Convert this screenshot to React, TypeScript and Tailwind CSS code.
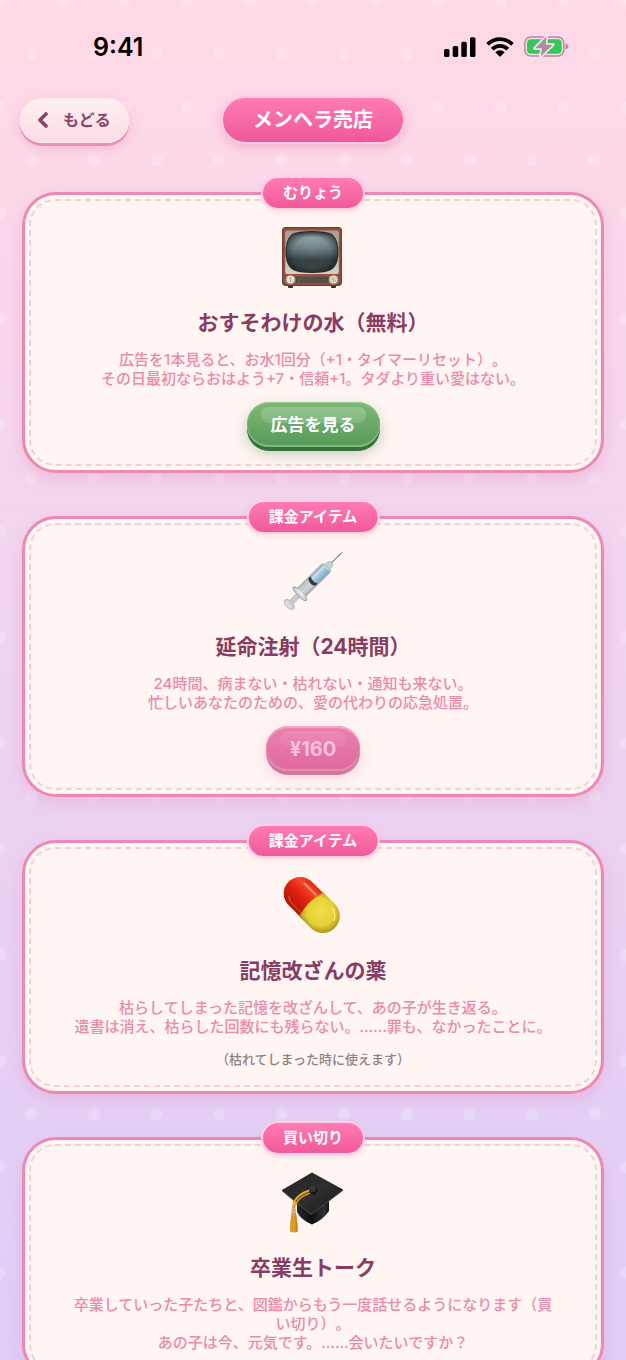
import type { ReactNode } from "react"

type Item = {
  id: string
  badge: string
  icon: ReactNode
  title: string
  lines: string[]
  action?: { label: string; kind: "free" | "paid" }
  note?: string
}

function TvIcon() {
  return (
    <svg viewBox="0 0 62 62" className="size-[62px]" aria-hidden="true">
      <defs>
        <linearGradient id="tv-screen" x1="0" y1="0" x2="0" y2="1">
          <stop offset="0" stopColor="#55666a" />
          <stop offset="0.12" stopColor="#9fb4b6" />
          <stop offset="0.4" stopColor="#76898b" />
          <stop offset="0.7" stopColor="#3a4547" />
          <stop offset="1" stopColor="#3d4645" />
        </linearGradient>
        <radialGradient id="tv-shade" cx="0.5" cy="0.5" r="0.6">
          <stop offset="0" stopColor="#2b3436" stopOpacity="0" />
          <stop offset="0.6" stopColor="#2b3436" stopOpacity="0.15" />
          <stop offset="1" stopColor="#0d1213" stopOpacity="0.8" />
        </radialGradient>
        <linearGradient id="tv-front" x1="0" y1="0" x2="0" y2="1">
          <stop offset="0" stopColor="#a79d91" />
          <stop offset="1" stopColor="#d9d0c2" />
        </linearGradient>
      </defs>
      <rect x="6" y="57" width="5" height="4" rx="1" fill="#3f2a22" />
      <rect x="49" y="57" width="5" height="4" rx="1" fill="#3f2a22" />
      <rect x="0" y="0" width="60" height="59" rx="4" fill="#944f40" />
      <rect x="0.6" y="0.6" width="58.8" height="57.8" rx="3.6" fill="none" stroke="#70402f" strokeWidth="1.2" />
      <rect x="3.200" y="3.500" width="53.600" height="43.500" rx="2" fill="url(#tv-front)" />
      <path d="M30 4Q44 4 49 6.500C54 9.500 56.500 16 56.500 25S54 40 49 43Q44 46 30 46T11 43C6 40 3.500 34 3.500 25S6 9.500 11 6.500Q16 4 30 4Z" fill="#272c2d" />
      <path d="M30 5.200Q43.500 5.200 48.300 7.700C53 10.500 55.200 17 55.200 25S53 39.200 48.300 42Q43.500 44.800 30 44.800T11.700 42C7 39.200 4.800 33 4.800 25S7 10.500 11.700 7.700Q16.500 5.200 30 5.200Z" fill="url(#tv-screen)" />
      <path d="M30 5.200Q43.500 5.200 48.300 7.700C53 10.500 55.200 17 55.200 25S53 39.200 48.300 42Q43.500 44.800 30 44.800T11.700 42C7 39.200 4.800 33 4.800 25S7 10.500 11.700 7.700Q16.500 5.200 30 5.200Z" fill="url(#tv-shade)" />
      <rect x="2.500" y="47" width="55" height="1.600" fill="#a44f3c" />
      <rect x="3" y="48.800" width="54" height="8.200" fill="#745f52" />
      <rect x="14" y="49.800" width="32" height="6.200" fill="#514a40" />
      <path d="M15 51.500H45M15 53H45M15 54.500H45" stroke="#675f53" strokeWidth="0.5" />
      <path d="M15 56L20 50.500" stroke="#a85a47" strokeWidth="0.800" />
      <circle cx="8.500" cy="53" r="4.800" fill="#8a8473" />
      <circle cx="8.500" cy="52.500" r="4.100" fill="#e6e2cf" />
      <path d="M8.500 50V55" stroke="#aaa593" strokeWidth="1.200" />
      <circle cx="51.500" cy="53" r="4.800" fill="#8a8473" />
      <circle cx="51.500" cy="52.500" r="4.100" fill="#dedabf" />
      <path d="M49 51.500L54 54M51.500 50V55" stroke="#b3af97" strokeWidth="0.800" />
    </svg>
  )
}

function SyringeIcon() {
  return (
    <svg viewBox="0 0 62 62" className="size-[62px]" aria-hidden="true">
      <defs>
        <linearGradient id="sy-glass" x1="0" y1="0" x2="0" y2="1">
          <stop offset="0" stopColor="#a0a4a9" />
          <stop offset="0.4" stopColor="#dcdee1" />
          <stop offset="0.75" stopColor="#c9ccd0" />
          <stop offset="1" stopColor="#a9b0b4" />
        </linearGradient>
        <linearGradient id="sy-fluid" x1="0" y1="0" x2="0" y2="1">
          <stop offset="0" stopColor="#7fa9c6" />
          <stop offset="0.5" stopColor="#9fc8e2" />
          <stop offset="0.8" stopColor="#bddcec" />
          <stop offset="1" stopColor="#8fa9b5" />
        </linearGradient>
      </defs>
      {/* drawn along the x axis from the needle tip, then turned to point up right */}
      <g transform="translate(60 1.500) rotate(135.500)">
        <path d="M0 0H16" stroke="#83888d" strokeWidth="1.100" />
        <path d="M14 -1.500L18 -3.500H22V3.500H18L14 1.500Z" fill="#b9d6d9" stroke="#8ba5aa" strokeWidth="0.600" />
        <path d="M24 -6H57V6H24Q20.500 6 20.500 3V-3Q20.500 -6 24 -6Z" fill="url(#sy-glass)" stroke="#a2abb0" strokeWidth="0.700" />
        <path d="M24.500 -5H40V5H24.500Q22 5 22 2.500V-2.500Q22 -5 24.500 -5Z" fill="url(#sy-fluid)" />
        <path d="M39 -5Q42 0 39 5H42.500Q46 0 42.500 -5Z" fill="#33393e" />
        <path d="M24 2.500H40" stroke="#fff" strokeWidth="1" opacity="0.350" />
        <path d="M45 -1.500H56M45 1H56" stroke="#aeb1b6" strokeWidth="0.700" />
        <rect x="60" y="-2.500" width="14" height="5" fill="#c8cacc" stroke="#a5a8ab" strokeWidth="0.600" />
        <ellipse cx="59" cy="0" rx="2.600" ry="9.500" fill="#d0d2d5" stroke="#94989b" strokeWidth="0.900" />
        <ellipse cx="57.800" cy="0" rx="1.600" ry="6" fill="#e4e5e7" />
        <ellipse cx="74" cy="0" rx="3.400" ry="6.300" fill="#cbcdcf" stroke="#adafb1" strokeWidth="0.700" />
        <ellipse cx="75" cy="0" rx="1.800" ry="4.500" fill="#dadbdd" />
      </g>
    </svg>
  )
}

function PillIcon() {
  return (
    <svg viewBox="0 0 62 62" className="size-[62px]" aria-hidden="true">
      <defs>
        <linearGradient id="pill-red" x1="0" y1="0" x2="0" y2="1">
          <stop offset="0" stopColor="#d92a10" />
          <stop offset="0.2" stopColor="#f04a2c" />
          <stop offset="0.5" stopColor="#e32311" />
          <stop offset="1" stopColor="#ae1608" />
        </linearGradient>
        <radialGradient id="pill-yellow" cx="0.400" cy="0.450" r="0.650">
          <stop offset="0" stopColor="#f0df49" />
          <stop offset="0.6" stopColor="#e6d236" />
          <stop offset="1" stopColor="#a68712" />
        </radialGradient>
      </defs>
      <g transform="translate(29.500 29.700) rotate(45)">
        <path d="M4 -16.500H-16A16.500 16.500 0 0 0 -16 16.500H4Z" fill="url(#pill-red)" />
        <path d="M0 -17H16A17 17 0 0 1 16 17H0Q-6 0 0 -17Z" fill="url(#pill-yellow)" />
        <path d="M0 -17Q-6 0 0 17" fill="none" stroke="#c29c15" strokeWidth="0.700" />
        <path d="M-20 -10H-4" stroke="#ffb09a" strokeWidth="2" strokeLinecap="round" opacity="0.550" />
        <path d="M18 -12Q24 -11 27 -5" fill="none" stroke="#fff8b5" strokeWidth="1.400" strokeLinecap="round" opacity="0.650" />
        <path d="M-22 10Q-19 13 -14 13H18" fill="none" stroke="#ffe9a0" strokeWidth="0.900" opacity="0.400" />
      </g>
    </svg>
  )
}

function CapIcon() {
  return (
    <svg viewBox="0 0 62 62" className="size-[62px]" aria-hidden="true">
      <defs>
        <linearGradient id="cap-board" x1="0" y1="0" x2="1" y2="1">
          <stop offset="0" stopColor="#222424" />
          <stop offset="0.5" stopColor="#2e3030" />
          <stop offset="1" stopColor="#151616" />
        </linearGradient>
        <linearGradient id="cap-hat" x1="0" y1="0" x2="1" y2="0">
          <stop offset="0" stopColor="#262828" />
          <stop offset="0.45" stopColor="#0e0f0f" />
          <stop offset="0.85" stopColor="#2f3131" />
          <stop offset="1" stopColor="#161717" />
        </linearGradient>
        <linearGradient id="cap-tassel" x1="0" y1="0" x2="1" y2="0">
          <stop offset="0" stopColor="#dd9219" />
          <stop offset="0.5" stopColor="#eba62b" />
          <stop offset="1" stopColor="#b8700c" />
        </linearGradient>
      </defs>
      <path d="M15 26V40Q19 48 30 52.500Q41 48 47 39V25Z" fill="url(#cap-hat)" />
      <path d="M0 18L30 0.500L61 17.500V18.500L29 43L0 19Z" fill="url(#cap-board)" />
      <path d="M0.500 19L29 42.300L60.500 18.300" fill="none" stroke="#4c4f4f" strokeWidth="0.900" />
      <ellipse cx="30" cy="18" rx="5.500" ry="4.600" fill="#0f1010" />
      <ellipse cx="30" cy="17" rx="4.300" ry="3.400" fill="#343636" />
      <path d="M27 18.500Q17 22 12.500 29Q11 32 11 38" fill="none" stroke="#f0a51e" strokeWidth="1.900" />
      <path d="M28 21Q19 24 15 30Q12.500 33 12 38" fill="none" stroke="#e0951a" strokeWidth="1.700" />
      <rect x="9.500" y="36" width="4.500" height="5.500" rx="1.500" fill="#c5b48a" />
      <path d="M9.500 41H14Q15.800 49 15.800 59.500Q12 61.500 8 59.500Q8 49 9.500 41Z" fill="url(#cap-tassel)" />
      <path d="M10.500 44L10 59M12.500 44L13 59" stroke="#c47f12" strokeWidth="0.500" />
    </svg>
  )
}

const items: Item[] = [
  {
    id: "water",
    badge: "むりょう",
    icon: <TvIcon />,
    title: "おすそわけの水（無料）",
    lines: [
      "広告を1本見ると、お水1回分（+1・タイマーリセット）。",
      "その日最初ならおはよう+7・信頼+1。タダより重い愛はない。",
    ],
    action: { label: "広告を見る", kind: "free" },
  },
  {
    id: "injection",
    badge: "課金アイテム",
    icon: <SyringeIcon />,
    title: "延命注射（24時間）",
    lines: [
      "24時間、病まない・枯れない・通知も来ない。",
      "忙しいあなたのための、愛の代わりの応急処置。",
    ],
    action: { label: "¥160", kind: "paid" },
  },
  {
    id: "memory",
    badge: "課金アイテム",
    icon: <PillIcon />,
    title: "記憶改ざんの薬",
    lines: [
      "枯らしてしまった記憶を改ざんして、あの子が生き返る。",
      "遺書は消え、枯らした回数にも残らない。……罪も、なかったことに。",
    ],
    note: "（枯れてしまった時に使えます）",
  },
  {
    id: "graduate",
    badge: "買い切り",
    icon: <CapIcon />,
    title: "卒業生トーク",
    lines: [
      "卒業していった子たちと、図鑑からもう一度話せるようになります（買い切り）。",
      "あの子は今、元気です。……会いたいですか？",
    ],
  },
]

function StatusBar() {
  return (
    <div className="flex h-[93px] items-center justify-between pr-[57px] pl-[93px] text-black">
      <span className="text-[25px] leading-8 font-semibold">9:41</span>
      <div className="flex items-center gap-[10px]">
        <svg viewBox="0 0 32 20" className="h-5 w-8" aria-hidden="true">
          <rect x="0" y="12" width="5.500" height="8" rx="1.600" />
          <rect x="8.700" y="9" width="5.500" height="11" rx="1.600" />
          <rect x="17.300" y="4.800" width="5.500" height="15.200" rx="1.600" />
          <rect x="26" y="0.300" width="5.500" height="19.700" rx="1.600" />
        </svg>
        <svg viewBox="0 0 28 20" className="h-5 w-7" aria-hidden="true">
          <g fill="none" stroke="#000" strokeWidth="3.800">
            <path d="M1.600 7.300A17.500 17.500 0 0 1 26.400 7.300" />
            <path d="M6.200 12.100A11 11 0 0 1 21.800 12.100" />
          </g>
          <path d="M9.300 15.200A6.800 6.800 0 0 1 18.700 15.200L14.700 19.300Q14 20 13.300 19.300Z" />
        </svg>
        <svg viewBox="0 0 45 21" className="h-[21px] w-[45px]" aria-hidden="true">
          <rect x="0.800" y="1" width="39" height="19" rx="6" fill="none" stroke="#a8909d" strokeWidth="1.500" />
          <path d="M41.500 7.500Q44.500 8.500 44.500 10.500T41.500 13.500Z" fill="#a8909d" />
          <rect x="3" y="3.200" width="34.600" height="14.600" rx="4" fill="#34c759" />
          <path d="M22.500 0.800L11 12.200H18L16.800 20.200L28.800 8.800H21.500Z" fill="#a8909d" stroke="#fddceb" strokeWidth="3.600" strokeLinejoin="round" paintOrder="stroke" />
        </svg>
      </div>
    </div>
  )
}

function ActionButton({ label, kind }: { label: string; kind: "free" | "paid" }) {
  if (kind === "free") {
    return (
      <button
        type="button"
        className="relative mt-[14px] h-[45px] rounded-[22px] bg-linear-to-b from-[#7fb877] to-[#559a57] px-6 text-[17px] leading-6 font-bold text-white shadow-[inset_0_1px_1px_#9bcb93,inset_0_-2px_1px_#7fbb7e,0_4px_0_#38703f,0_6px_14px_#5c8c5c66]"
      >
        <span className="absolute inset-x-[14px] top-[5px] h-4 rounded-[9px] bg-linear-to-b from-white/20 to-white/15" />
        <span className="relative">{label}</span>
      </button>
    )
  }
  return (
    <button
      type="button"
      disabled
      className="relative mt-[14px] h-[45px] rounded-[22px] bg-linear-to-b from-[#ea80ae] to-[#e0699f] px-6 text-xl leading-6 font-bold text-[#f8bfd8] shadow-[inset_0_2px_1px_#f6a7c9,inset_0_-2px_1px_#e88bb4,0_4px_0_#d2789d,0_6px_14px_#d66a9a40]"
    >
      <span className="absolute inset-x-[14px] top-[5px] h-4 rounded-[9px] bg-linear-to-b from-white/10 to-white/5" />
      <span className="relative">{label}</span>
    </button>
  )
}

function ItemCard({ item }: { item: Item }) {
  return (
    <article className="relative flex flex-col items-center rounded-[34px] border-3 border-[#ec89b2] bg-[#fff5f2] px-11 pt-8 pb-[23px] text-center shadow-[0_6px_16px_#e88cb855]">
      <div className="pointer-events-none absolute inset-[4px] rounded-[26px] border-2 border-dashed border-[#f5cfd6]" />
      <span className="absolute -top-[19px] left-1/2 h-[34px] -translate-x-1/2 rounded-full border-2 border-[#ffcfe2] bg-linear-to-b from-[#ff7bb3] to-[#f2589a] px-5 text-[15px] leading-[30px] font-bold whitespace-nowrap text-white shadow-[0_2px_5px_#e86ba033]">
        {item.badge}
      </span>
      {item.icon}
      <h2 className="mt-[18px] text-[21px] leading-8 font-bold text-[#893c63]">{item.title}</h2>
      <div className="mt-[11px] text-[15px] leading-[19px] font-medium text-[#e88bac]">
        {item.lines.map((line) => (
          <p key={line}>{line}</p>
        ))}
      </div>
      {item.action && <ActionButton label={item.action.label} kind={item.action.kind} />}
      {item.note && (
        <p className="mt-[14px] text-[13px] leading-[18px] font-medium text-[#8f8482]">{item.note}</p>
      )}
    </article>
  )
}

export default function App() {
  return (
    <div
      lang="ja"
      className="relative h-screen overflow-hidden bg-linear-to-b from-[#ffd9e7] via-[#f0d4ef] via-45% to-[#dfcdf8] font-['Inter','Noto_Sans_CJK_JP',sans-serif] [text-spacing-trim:space-all]"
    >
      {/* Polka dots */}
      <div className="absolute inset-0 bg-[radial-gradient(circle,#ffffff33_5px,transparent_7px),radial-gradient(circle,#ffffff33_5px,transparent_7px)] bg-size-[10%_106px] bg-position-[0_1px,31px_54px] bg-repeat" />

      <div className="relative flex h-full flex-col">
        <StatusBar />

        <header className="grid grid-cols-[1fr_auto_1fr] items-center px-5 pt-[3px]">
          <button
            type="button"
            className="flex h-[45px] w-[109px] items-center gap-[13px] rounded-[22px] bg-linear-to-b from-[#fff1ee] to-[#fbdbe6] pl-4 text-base font-bold text-[#8a4669] shadow-[inset_0_-1px_1px_#ffeaf1,0_3px_0_#ec8fb5,0_5px_12px_#e88cb866]"
          >
            <svg viewBox="0 0 14 18" className="h-[18px] w-[14px]" fill="none" stroke="currentColor" strokeWidth="3.800" strokeLinecap="round" strokeLinejoin="round" aria-hidden="true">
              <path d="M10 3L4 9L10 15" />
            </svg>
            もどる
          </button>
          <h1 className="h-12 rounded-full border-2 border-[#ffcadf] bg-linear-to-b from-[#ff7bb3] to-[#f0589a] px-[30px] text-xl leading-[44px] font-bold text-white shadow-[0_4px_10px_#e86ba055]">
            メンヘラ売店
          </h1>
        </header>

        <main className="flex-1 overflow-y-auto px-[22px] pt-12 pb-10 [scrollbar-width:none]">
          <div className="flex flex-col gap-[43px]">
            {items.map((item) => (
              <ItemCard key={item.id} item={item} />
            ))}
          </div>
        </main>
      </div>
    </div>
  )
}
